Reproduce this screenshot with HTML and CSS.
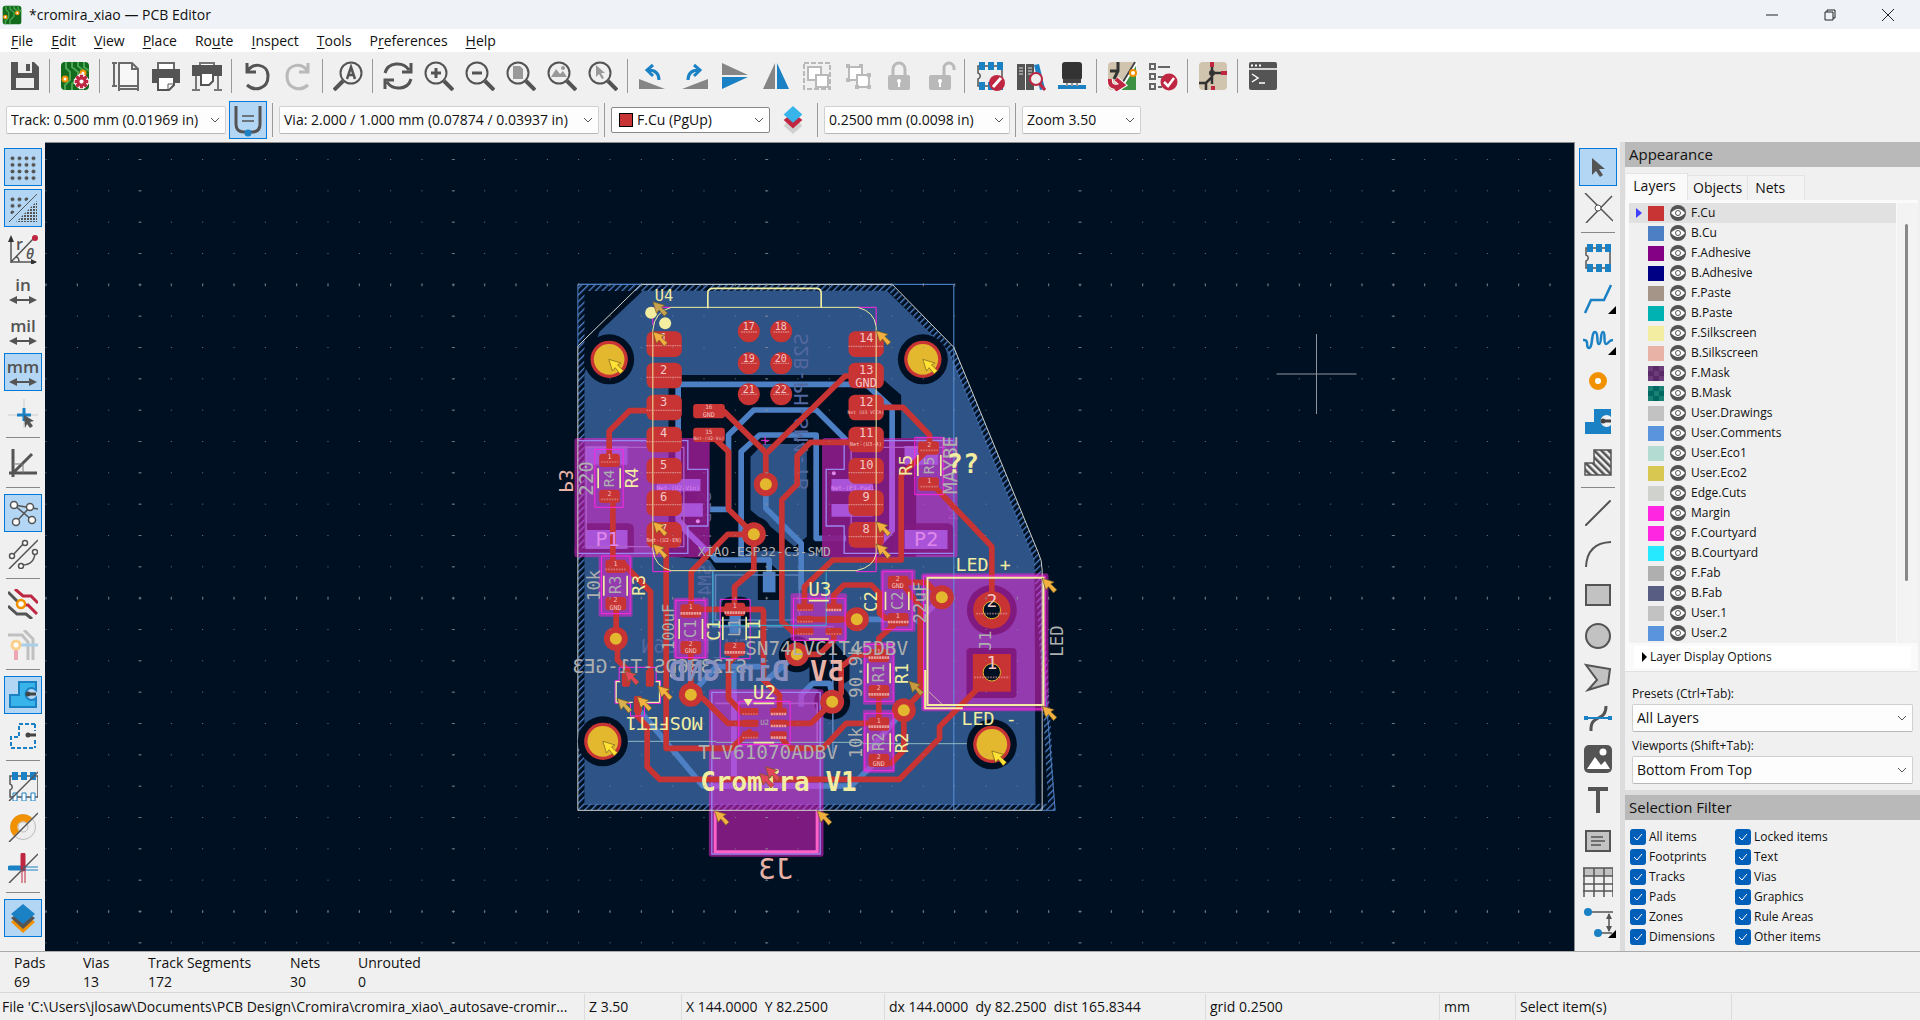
FILE: index.html
```html
<!DOCTYPE html>
<html lang="en">
<head>
<meta charset="utf-8">
<title>*cromira_xiao — PCB Editor</title>
<link rel="stylesheet" href="styles.css">
</head>
<body>
<svg class="defs" aria-hidden="true">
<defs>
<symbol id="board" viewBox="0 0 30 30"><rect x="1" y="1" width="28" height="28" rx="4" fill="#126b1c"/><path d="M6 1v6l4 4v8l-5 5v5M12 1v5l6 5v6l-6 6v6M18 1v4l6 5M24 1v5l5 4" fill="none" stroke="#4aa653" stroke-width="2"/><circle cx="5" cy="18" r="2.500" fill="#fff" stroke="#f29100" stroke-width="2"/><circle cx="23" cy="12" r="2.500" fill="#fff" stroke="#f29100" stroke-width="2"/></symbol>
<symbol id="gear" viewBox="0 0 20 20"><path d="M10 1v18M1 10h18M4 4l12 12M16 4L4 16" stroke="#fff" stroke-width="6"/><path d="M10 2v16M2 10h16M4 4l12 12M16 4L4 16" stroke="#bf2641" stroke-width="4"/><circle cx="10" cy="10" r="4" fill="#fff" stroke="#bf2641" stroke-width="3"/></symbol>
<symbol id="save" viewBox="0 0 30 30"><path d="M1 1h23l5 5v23H1z" fill="#545454"/><path d="M8 1h14v11H8z" fill="#eee"/><path d="M16 3h4v7h-4z" fill="#545454"/><path d="M6 17h18v10H6z" fill="#eee"/></symbol>
<symbol id="page" viewBox="0 0 30 30"><path d="M9 2h13l6 6v17H9z" fill="#f7f7f7" stroke="#6a6a6a" stroke-width="2"/><path d="M22 2v6h6M2 2h5M2 25h5M4 2v23M9 28h19M9 26v4M28 26v4" fill="none" stroke="#6a6a6a" stroke-width="2"/></symbol>
<symbol id="print" viewBox="0 0 30 30"><path d="M7 9V2h16v7" fill="#fff" stroke="#6a6a6a" stroke-width="2"/><path d="M1 8h28v14H1z" fill="#545454"/><path d="M7 16h16v8l-5 5H7z" fill="#fff" stroke="#545454" stroke-width="2"/><path d="M17 29v-6h6" fill="none" stroke="#545454"/></symbol>
<symbol id="plot" viewBox="0 0 30 30"><path d="M8 5V2h14v3" fill="#fff" stroke="#777" stroke-width="2"/><path d="M0 4h30v11H0z" fill="#545454"/><path d="M4 15v14M26 15v14M0 29h8M22 29h8" stroke="#777" stroke-width="2"/><path d="M9 12h12v8l-4 4H9z" fill="#fff" stroke="#545454" stroke-width="2"/></symbol>
<symbol id="undo" viewBox="0 0 30 30"><path d="M5 2v9h9M5 11C9 1 26 2 26 15s-13 16-21 9" fill="none" stroke="#545454" stroke-width="3"/></symbol>
<symbol id="find" viewBox="0 0 30 30"><circle cx="18" cy="12" r="10.500" fill="none" stroke="#545454" stroke-width="2"/><path d="M10 20l-9 9" stroke="#545454" stroke-width="4"/><path d="M14 18l4-12 4 12M15 14h6" fill="none" stroke="#545454" stroke-width="2.500"/></symbol>
<symbol id="refresh" viewBox="0 0 30 30"><path d="M2 12C5 1 20 0 26 9M28 2v9h-9M28 18c-3 11-18 12-24 3M2 28v-9h9" fill="none" stroke="#545454" stroke-width="3"/></symbol>
<symbol id="lens" viewBox="0 0 30 30"><circle cx="12" cy="12" r="10.500" fill="none" stroke="#545454" stroke-width="2"/><path d="M20 20l9 9" stroke="#545454" stroke-width="4"/></symbol>
<symbol id="rot" viewBox="0 0 30 30"><path d="M1 18v10h26z" fill="#858585"/><path d="M10 9c8 0 11 4 11 10M15 4L9 9l6 6" fill="none" stroke="#1a81c4" stroke-width="3"/></symbol>
<symbol id="mirror" viewBox="0 0 30 30"><path d="M14 2v26H2z" fill="#858585"/><path d="M16 2v26h12z" fill="#1a81c4"/></symbol>
<symbol id="group" viewBox="0 0 30 30"><path d="M6 6h13v13H6z" fill="#fff" stroke="#b9b9b9" stroke-width="2"/><path d="M14 14h12v12H14z" fill="#fff" stroke="#b9b9b9" stroke-width="2"/></symbol>
<symbol id="lock" viewBox="0 0 30 30"><rect x="4" y="14" width="22" height="15" rx="2" fill="#b9b9b9"/><circle cx="15" cy="20" r="2" fill="#fff"/><path d="M15 20v6" stroke="#fff" stroke-width="2"/></symbol>
<symbol id="foot" viewBox="0 0 30 30"><path d="M3 5h24v20H3v-7c3-1 3-5 0-6z" fill="#eee" stroke="#545454" stroke-width="1.500"/><path d="M4 1h6v8H4zM13 1h6v8h-6zM22 1h6v8h-6zM4 21h6v8H4zM13 21h6v8h-6zM22 21h6v8h-6z" fill="#1a81c4"/></symbol>
<symbol id="books" viewBox="0 0 30 30"><path d="M1 3h8v26H1zM10 3h8v26h-8z" fill="#545454"/><path d="M3 7h4M3 10h4M3 13h4M12 7h4M12 10h4M12 13h4" stroke="#ddd"/><path d="M18 4l5-1 6 25-5 1z" fill="#1a81c4"/><circle cx="20" cy="18" r="6" fill="#eee" stroke="#bf2641" stroke-width="2"/><path d="M24 23l5 6" stroke="#bf2641" stroke-width="3"/></symbol>
<symbol id="chip3d" viewBox="0 0 30 30"><path d="M1 24h28v4H1z" fill="#1a81c4"/><path d="M10 20v5M15 20v5M20 20v5" stroke="#999" stroke-width="2"/><rect x="5" y="1" width="20" height="18" rx="3" fill="#333"/><path d="M6 18h18v4H6z" fill="#444"/></symbol>
<symbol id="update" viewBox="0 0 30 30"><rect x="1" y="1" width="28" height="28" rx="4" fill="#d1c4ae"/><path d="M29 1v28H12z" fill="#3c9242"/><path d="M11 1v9l-4 8M11 10H3" stroke="#333" stroke-width="3" fill="none"/><path d="M29 1L12 29" stroke="#fff" stroke-width="4"/><path d="M28 1L11 29" stroke="#444" stroke-width="2"/><circle cx="26" cy="12" r="3" fill="#fff" stroke="#f29100" stroke-width="2"/><path d="M3 18c-1 9 7 9 11 6M9 18l7 6-8 5" fill="none" stroke="#fff" stroke-width="6"/><path d="M3 18c-1 9 7 9 11 6M9 18l7 6-8 5" fill="none" stroke="#bf2641" stroke-width="4"/></symbol>
<symbol id="drc" viewBox="0 0 30 30"><path d="M2 3h5v5H2zM2 13h5v5H2zM2 23h5v5H2zM10 6h12M10 16h6M10 26h4" fill="none" stroke="#666" stroke-width="2"/><circle cx="21" cy="21" r="8.500" fill="#bf2641"/><path d="M16 21l4 4 6-8" fill="none" stroke="#fff" stroke-width="2.500"/></symbol>
<symbol id="schem" viewBox="0 0 30 30"><rect x="1" y="1" width="28" height="28" rx="4" fill="#d1c4ae"/><path d="M14 5v18M14 12h10M14 16l-6 6H1M8 22v7" stroke="#333" stroke-width="2.500" fill="none"/><circle cx="14" cy="12" r="3" fill="#333"/><path d="M14 1v5M23 12h6M15 25v4" stroke="#bf2641" stroke-width="4"/></symbol>
<symbol id="console" viewBox="0 0 30 30"><rect x="1" y="1" width="28" height="28" rx="2" fill="#545454"/><path d="M1 8h28M4 13l6 4-6 4M11 22h6" fill="none" stroke="#fff" stroke-width="1.500"/><path d="M3 4.500h10" stroke="#fff" stroke-width="2" stroke-dasharray="2 2"/></symbol>
<symbol id="autotrack" viewBox="0 0 30 34"><path d="M3 3v18q0 8 8 8h8q8 0 8-8V3" fill="none" stroke="#545454" stroke-width="3"/><path d="M9 13h12M9 18h12" stroke="#545454" stroke-width="1.500"/><circle cx="15" cy="30" r="3.500" fill="#1a81c4"/></symbol>
<symbol id="layers3" viewBox="0 0 24 32"><path d="M12 12l10 10-10 9-10-9z" fill="#d0d0d0"/><path d="M12 8l10 8-10 9-10-9z" fill="#bf2641"/><path d="M12 1l10 9-10 9L2 10z" fill="#39b4ea"/></symbol>
<pattern id="dot6" width="7" height="6.600" patternUnits="userSpaceOnUse" x="1" y="3"><circle cx="3.500" cy="3.300" r="2" fill="#545454"/></pattern>
<pattern id="dot3" width="3" height="3" patternUnits="userSpaceOnUse"><rect width="2" height="2" x="1" y="1" fill="#545454"/></pattern>
<symbol id="grid" viewBox="0 0 30 30"><rect x="1" y="2" width="28" height="27" fill="url(#dot6)"/></symbol>
<symbol id="grid2" viewBox="0 0 30 30"><path d="M1 2h24L1 24z" fill="url(#dot6)"/><path d="M29 8v21H8z" fill="url(#dot3)"/><path d="M1 29L29 1" stroke="#545454"/></symbol>
<symbol id="polar" viewBox="0 0 30 30"><path d="M3 29V3M3 28h25M3 28L26 4M11 28q0-4-3-6" fill="none" stroke="#545454" stroke-width="1.500"/><path d="M0 8l3-7 3 7zM23 25l6 3-6 3z" fill="#333"/><circle cx="27" cy="4" r="3" fill="#bf2641"/><text x="8" y="16" class="g16">r</text><text x="18" y="25" class="g14"><tspan font-style="italic">θ</tspan></text></symbol>
<symbol id="arrowlr" viewBox="0 0 30 30"><path d="M5 25h20" stroke="#545454" stroke-width="2"/><path d="M1 25l8-4v8zM29 25l-8-4v8z" fill="#545454"/></symbol>
<symbol id="cursor" viewBox="0 0 30 30"><path d="M0 17h30M16 1v29" stroke="#ccc"/><path d="M9 17h14M16 10v13" stroke="#1a81c4" stroke-width="3"/><path d="M16 17l10 6-4 1 3 4-3 2-3-4-2 4z" fill="#545454"/></symbol>
<symbol id="angle" viewBox="0 0 30 30"><path d="M5 1v28M1 25h28M5 25L24 6" stroke="#545454" stroke-width="3"/><path d="M5 16h10v9" fill="none" stroke="#777"/></symbol>
<symbol id="rats" viewBox="0 0 30 30"><path d="M6 7l24 4M8 24L22 9M6 7l18 15" stroke="#545454" stroke-width="1.500"/><g fill="#fff" stroke="#545454" stroke-width="1.500"><circle cx="6" cy="7" r="3.500"/><circle cx="22" cy="9" r="3.500"/><circle cx="8" cy="24" r="3.500"/><circle cx="24" cy="22" r="3.500"/></g></symbol>
<symbol id="curved" viewBox="0 0 30 30"><path d="M1 30L30 1M5 16L16 4M14 26q12 0 13-12" fill="none" stroke="#545454" stroke-width="1.500"/><g fill="#fff" stroke="#545454" stroke-width="1.500"><circle cx="4" cy="17" r="2.500"/><circle cx="17" cy="4" r="2.500"/><circle cx="13" cy="27" r="2.500"/><circle cx="27" cy="13" r="2.500"/></g></symbol>
<symbol id="nets" viewBox="0 0 30 30"><path d="M0 3l12 12M0 17l9 8h9l6 5" fill="none" stroke="#545454" stroke-width="3"/><path d="M7 0l8 7h8l7 7M15 16h5l9 9" fill="none" stroke="#bf2641" stroke-width="3"/><circle cx="13" cy="15" r="4" fill="#fff" stroke="#f29100" stroke-width="2.500"/></symbol>
<symbol id="netsoff" viewBox="0 0 30 30"><path d="M0 5h14l6 7v18M16 0l9 9v21" fill="none" stroke="#c0c0c0" stroke-width="3"/><path d="M12 15h18" stroke="#a8cfe8" stroke-width="3"/><path d="M8 18v12" stroke="#eba8b4" stroke-width="4"/><circle cx="8" cy="15" r="4" fill="#fff" stroke="#fbd08c" stroke-width="3"/></symbol>
<symbol id="zone" viewBox="0 0 30 30"><path d="M11 2h17v8a6 6 0 1 0 0 8v9H2V15h9z" fill="#1a81c4"/><path d="M19 14h9" stroke="#444" stroke-width="3"/><circle cx="20" cy="14" r="2.500" fill="#444"/></symbol>
<symbol id="zonefill" viewBox="0 0 30 30"><path d="M11 2h17v8a6 6 0 1 0 0 8v9H2V15h9z" fill="#39b4ea" stroke="#1a81c4" stroke-width="2"/><path d="M19 14h9" stroke="#444" stroke-width="3"/><circle cx="20" cy="14" r="2.500" fill="#444"/></symbol>
<symbol id="zoneline" viewBox="0 0 30 30"><path d="M27 3H11v13H3v11h24M27 3v7M27 19v8" fill="none" stroke="#1a81c4" stroke-width="2" stroke-dasharray="4 2"/><path d="M19 14h9" stroke="#444" stroke-width="3"/><circle cx="20" cy="14" r="2.500" fill="#444"/></symbol>
<symbol id="slash" viewBox="0 0 30 30"><path d="M1 30L30 1" stroke="#545454" stroke-width="1.500"/></symbol>
<symbol id="footline" viewBox="0 0 30 30"><path d="M2 5h28v21H2v-7c3-1 3-5 0-6z" fill="none" stroke="#545454" stroke-width="1.500"/><path d="M4 1h6v8H4zM13 1h6v8h-6zM22 1h6v8h-6z" fill="#1a81c4"/><path d="M5 22h4v8H5zM14 22h4v8h-4zM23 22h4v8h-4z" fill="#fff" stroke="#1a81c4"/></symbol>
<symbol id="vialine" viewBox="0 0 30 30"><circle cx="15" cy="15" r="12.500" fill="#eee" stroke="#bbb"/><circle cx="15" cy="15" r="5" fill="#eee" stroke="#bbb"/><path d="M6 24A12.500 12.500 0 0 1 24 6l-5 5a5 5 0 0 0-8 8z" fill="#f29100"/></symbol>
<symbol id="trackline" viewBox="0 0 30 30"><path d="M2 15h13" stroke="#1a81c4" stroke-width="5" stroke-linecap="round"/><path d="M15 2v14" stroke="#bf2641" stroke-width="5" stroke-linecap="round"/><path d="M15 14h15M15 17h15" stroke="#1a81c4"/><path d="M14 16v14M17 16v14" stroke="#bf2641"/></symbol>
<symbol id="layers4" viewBox="0 0 30 30"><path d="M15 9l12 10-12 11L3 19z" fill="#f29100"/><path d="M15 7l12 8-12 11L3 15z" fill="#545454"/><path d="M15 1l12 10-12 10L3 11z" fill="#1a81c4"/></symbol>
<symbol id="pointer" viewBox="0 0 30 30"><path d="M9 6l13 11h-6l4 6-3 2-4-6-4 4z" fill="#545454"/></symbol>
<symbol id="cross" viewBox="0 0 30 30"><path d="M2 0l28 28M29 3L3 30" stroke="#545454" stroke-width="1.500"/><circle cx="15" cy="15" r="3" fill="#fff" stroke="#545454"/></symbol>
<symbol id="route" viewBox="0 0 30 30"><path d="M2 29L8 16h13l7-15" fill="none" stroke="#1a81c4" stroke-width="2.500"/></symbol>
<symbol id="tune" viewBox="0 0 30 30"><path d="M0 15c7-1 2 8 6 8s2-16 6-16 1 12 4 12 1-12 4-12 0 12 3 12 2-4 7-4" fill="none" stroke="#1a81c4" stroke-width="2.500"/></symbol>
<symbol id="via" viewBox="0 0 30 30"><circle cx="15" cy="15" r="6" fill="#fff" stroke="#f29100" stroke-width="6"/></symbol>
<pattern id="rule" width="5" height="5" patternUnits="userSpaceOnUse" patternTransform="rotate(-45)"><rect width="2.500" height="5" fill="#545454"/></pattern>
<symbol id="rulearea" viewBox="0 0 30 30"><path d="M11 2h17v25H2V15h9z" fill="url(#rule)" stroke="#545454" stroke-width="1.500"/></symbol>
<symbol id="line" viewBox="0 0 30 30"><path d="M3 27L27 3" stroke="#545454" stroke-width="2" stroke-linecap="round"/></symbol>
<symbol id="arc" viewBox="0 0 30 30"><path d="M3 28Q4 4 28 3" fill="none" stroke="#545454" stroke-width="2"/></symbol>
<symbol id="rect" viewBox="0 0 30 30"><path d="M3 5h24v20H3z" fill="#c2c2c2" stroke="#545454" stroke-width="2"/></symbol>
<symbol id="circ" viewBox="0 0 30 30"><circle cx="15" cy="15" r="12" fill="#c2c2c2" stroke="#545454" stroke-width="2"/></symbol>
<symbol id="poly" viewBox="0 0 30 30"><path d="M3 3l24 4-2 15-20 6 9-10z" fill="#c2c2c2" stroke="#545454" stroke-width="2"/></symbol>
<symbol id="bezier" viewBox="0 0 30 30"><path d="M8 28C7 10 23 20 23 3" fill="none" stroke="#545454" stroke-width="3"/><path d="M2 15h26" stroke="#1a81c4" stroke-width="2"/><path d="M1 13h4v4H1zM25 13h4v4h-4z" fill="#1a81c4"/></symbol>
<symbol id="image" viewBox="0 0 30 30"><rect x="1" y="1" width="28" height="28" rx="5" fill="#545454"/><path d="M4 25l8-12 6 8 4-4 5 8z" fill="#fff"/><circle cx="20" cy="8" r="3.500" fill="#fff"/></symbol>
<symbol id="tee" viewBox="0 0 30 30"><path d="M5 4h20M15 4v24" stroke="#545454" stroke-width="4"/></symbol>
<symbol id="tbox" viewBox="0 0 30 30"><path d="M3 5h24v20H3z" fill="#c2c2c2" stroke="#545454" stroke-width="2"/><path d="M8 11h12M8 15h14M8 19h10" stroke="#545454" stroke-width="1.500"/></symbol>
<symbol id="table" viewBox="0 0 30 30"><path d="M0 1h30v8H0z" fill="#c2c2c2"/><path d="M0 1h30M0 9h30M0 17h30M0 24h30M1 1v29M11 1v29M21 1v29M30 1v29" stroke="#545454" stroke-width="1.500"/></symbol>
<symbol id="dim" viewBox="0 0 30 30"><path d="M4 4h26M15 25h14M26 6v17" stroke="#545454" stroke-width="1.500"/><path d="M23 11l3-6 3 6zM23 18l3 6 3-6z" fill="#545454"/><circle cx="5" cy="4" r="4" fill="#1a81c4"/><circle cx="15" cy="25" r="4" fill="#1a81c4"/></symbol>
<symbol id="eye" viewBox="0 0 16 16"><circle cx="8" cy="8" r="8" fill="#545454"/><path d="M1 8q7-8 14 0-7 8-14 0z" fill="#fff"/><circle cx="8" cy="8" r="2.500" fill="#fff" stroke="#545454"/></symbol>
</defs>
</svg>

<header class="titlebar">
  <svg class="logo"><use href="#board"/></svg>
  <h1 class="title">*cromira_xiao — PCB Editor</h1>
  <button class="win" aria-label="Minimize"><svg viewBox="0 0 12 12"><path d="M0 6h12"/></svg></button>
  <button class="win" aria-label="Restore"><svg viewBox="0 0 12 12"><path d="M1 3h8v8H1zM3 3V1h8v8H9"/></svg></button>
  <button class="win" aria-label="Close"><svg viewBox="0 0 12 12"><path d="M0 0l12 12M12 0L0 12"/></svg></button>
</header>
<nav class="menu">
  <button><u>F</u>ile</button><button><u>E</u>dit</button><button><u>V</u>iew</button><button><u>P</u>lace</button><button>Ro<u>u</u>te</button><button><u>I</u>nspect</button><button><u>T</u>ools</button><button>P<u>r</u>eferences</button><button><u>H</u>elp</button>
</nav>

<div class="bar">
  <button class="tool" aria-label="Save"><svg><use href="#save"/></svg></button>
  <i class="sep"></i>
  <button class="tool" aria-label="Board setup"><svg viewBox="0 0 30 30"><use href="#board"/><use href="#gear" x="13" y="12" width="17" height="17"/></svg></button>
  <i class="sep"></i>
  <button class="tool" aria-label="Page settings"><svg><use href="#page"/></svg></button>
  <button class="tool" aria-label="Print"><svg><use href="#print"/></svg></button>
  <button class="tool" aria-label="Plot"><svg><use href="#plot"/></svg></button>
  <i class="sep"></i>
  <button class="tool" aria-label="Undo"><svg><use href="#undo"/></svg></button>
  <button class="tool faded flip" aria-label="Redo"><svg><use href="#undo"/></svg></button>
  <i class="sep"></i>
  <button class="tool" aria-label="Find"><svg><use href="#find"/></svg></button>
  <i class="sep"></i>
  <button class="tool" aria-label="Refresh"><svg><use href="#refresh"/></svg></button>
  <button class="tool" aria-label="Zoom in"><svg viewBox="0 0 30 30"><use href="#lens"/><path d="M7 12h10M12 7v10" stroke="#545454" stroke-width="3"/></svg></button>
  <button class="tool" aria-label="Zoom out"><svg viewBox="0 0 30 30"><use href="#lens"/><path d="M7 12h10" stroke="#545454" stroke-width="3"/></svg></button>
  <button class="tool" aria-label="Zoom to page"><svg viewBox="0 0 30 30"><use href="#lens"/><path d="M7 5h7l3 3v10H7z" fill="#999"/></svg></button>
  <button class="tool" aria-label="Zoom to objects"><svg viewBox="0 0 30 30"><use href="#lens"/><path d="M4 16l5-8 4 5 3-3 4 6z" fill="#999"/><circle cx="16" cy="7" r="2" fill="#999"/></svg></button>
  <button class="tool" aria-label="Zoom to selection"><svg viewBox="0 0 30 30"><use href="#lens"/><path d="M8 4l9 8h-4l3 5-2 1-3-5-3 3z" fill="#999"/></svg></button>
  <i class="sep"></i>
  <button class="tool" aria-label="Rotate left"><svg><use href="#rot"/></svg></button>
  <button class="tool flip" aria-label="Rotate right"><svg><use href="#rot"/></svg></button>
  <button class="tool turn" aria-label="Mirror vertically"><svg><use href="#mirror"/></svg></button>
  <button class="tool" aria-label="Mirror horizontally"><svg><use href="#mirror"/></svg></button>
  <button class="tool" aria-label="Group"><svg viewBox="0 0 30 30"><path d="M2 2h26v26H2z" fill="none" stroke="#b9b9b9" stroke-width="2" stroke-dasharray="5 2"/><use href="#group"/></svg></button>
  <button class="tool" aria-label="Ungroup"><svg viewBox="0 0 30 30"><use href="#group"/><path d="M3 3h4v4H3zM16 3h4v4h-4zM3 17h4v4H3zM24 24h4v4h-4zM24 12h4v4h-4zM12 24h4v4h-4z" fill="#b9b9b9"/></svg></button>
  <button class="tool" aria-label="Lock"><svg viewBox="0 0 30 30"><use href="#lock"/><path d="M9 15V8a6 6 0 0 1 12 0v7" fill="none" stroke="#b9b9b9" stroke-width="3"/></svg></button>
  <button class="tool" aria-label="Unlock"><svg viewBox="0 0 30 30"><use href="#lock"/><path d="M19 15V7a5 5 0 0 1 10 0v2" fill="none" stroke="#b9b9b9" stroke-width="3"/></svg></button>
  <i class="sep"></i>
  <button class="tool" aria-label="Footprint editor"><svg viewBox="0 0 30 30"><use href="#foot"/><circle cx="22" cy="22" r="8" fill="#bf2641"/><path d="M18 26l8-9" stroke="#fff" stroke-width="3"/></svg></button>
  <button class="tool" aria-label="Footprint browser"><svg><use href="#books"/></svg></button>
  <button class="tool" aria-label="3D viewer"><svg><use href="#chip3d"/></svg></button>
  <i class="sep"></i>
  <button class="tool" aria-label="Update from schematic"><svg><use href="#update"/></svg></button>
  <button class="tool" aria-label="Design rules checker"><svg><use href="#drc"/></svg></button>
  <i class="sep"></i>
  <button class="tool" aria-label="Schematic editor"><svg><use href="#schem"/></svg></button>
  <i class="sep"></i>
  <button class="tool" aria-label="Scripting console"><svg><use href="#console"/></svg></button>
</div>

<div class="bar second">
  <select class="combo track" aria-label="Track width"><option>Track: 0.500 mm (0.01969 in)</option></select>
  <button class="tool on auto" aria-label="Auto track width"><svg><use href="#autotrack"/></svg></button>
  <i class="sep"></i>
  <select class="combo viasize" aria-label="Via size"><option>Via: 2.000 / 1.000 mm (0.07874 / 0.03937 in)</option></select>
  <i class="sep"></i>
  <label class="layerbox"><span class="chip"></span><select class="combo bare" aria-label="Active layer"><option>F.Cu (PgUp)</option></select></label>
  <button class="tool pair" aria-label="Layer pair"><svg><use href="#layers3"/></svg></button>
  <i class="sep"></i>
  <select class="combo gridsize" aria-label="Grid"><option>0.2500 mm (0.0098 in)</option></select>
  <i class="sep"></i>
  <select class="combo zoom" aria-label="Zoom"><option>Zoom 3.50</option></select>
</div>

<main class="work">
  <div class="side">
    <button class="tool on" aria-label="Grid"><svg><use href="#grid"/></svg></button>
    <button class="tool on" aria-label="Grid overrides"><svg><use href="#grid2"/></svg></button>
    <button class="tool" aria-label="Polar"><svg><use href="#polar"/></svg></button>
    <button class="tool" aria-label="Inches"><svg viewBox="0 0 30 30"><text x="15" y="16" class="unit">in</text><use href="#arrowlr"/></svg></button>
    <button class="tool" aria-label="Mils"><svg viewBox="0 0 30 30"><text x="15" y="16" class="unit">mil</text><use href="#arrowlr"/></svg></button>
    <button class="tool on" aria-label="Millimeters"><svg viewBox="0 0 30 30"><text x="15" y="16" class="unit">mm</text><use href="#arrowlr"/></svg></button>
    <button class="tool" aria-label="Full cursor"><svg><use href="#cursor"/></svg></button>
    <i class="sep"></i>
    <button class="tool" aria-label="Limit angles"><svg><use href="#angle"/></svg></button>
    <i class="sep"></i>
    <button class="tool on" aria-label="Ratsnest"><svg><use href="#rats"/></svg></button>
    <button class="tool" aria-label="Curved ratsnest"><svg><use href="#curved"/></svg></button>
    <i class="sep"></i>
    <button class="tool" aria-label="Inactive layers"><svg><use href="#nets"/></svg></button>
    <button class="tool" aria-label="Net colors"><svg><use href="#netsoff"/></svg></button>
    <i class="sep"></i>
    <button class="tool on" aria-label="Filled zones"><svg><use href="#zonefill"/></svg></button>
    <button class="tool" aria-label="Zone outlines"><svg><use href="#zoneline"/></svg></button>
    <i class="sep"></i>
    <button class="tool" aria-label="Sketch footprints"><svg viewBox="0 0 30 30"><use href="#footline"/><use href="#slash"/></svg></button>
    <button class="tool" aria-label="Sketch vias"><svg viewBox="0 0 30 30"><use href="#vialine"/><use href="#slash"/></svg></button>
    <button class="tool" aria-label="Sketch tracks"><svg viewBox="0 0 30 30"><use href="#trackline"/><use href="#slash"/></svg></button>
    <i class="sep"></i>
    <button class="tool on" aria-label="Appearance panel"><svg><use href="#layers4"/></svg></button>
  </div>

  <div class="canvas">
  <svg class="pcb" viewBox="-1515 -381 4590 2424" preserveAspectRatio="xMidYMid slice" role="img" aria-label="Board layout">
    <defs>
      <pattern id="g1" width="94" height="94" x="650" y="43" patternUnits="userSpaceOnUse"><rect width="3" height="3" fill="#8a9199"/></pattern>
      <pattern id="g2" width="94" height="940" x="650" y="40" patternUnits="userSpaceOnUse"><rect width="3" height="9" fill="#8a9199"/></pattern>
      <pattern id="g3" width="940" height="94" x="647" y="43" patternUnits="userSpaceOnUse"><rect width="9" height="3" fill="#8a9199"/></pattern>
      <pattern id="hatch" width="14" height="14" patternUnits="userSpaceOnUse" patternTransform="rotate(45)"><rect width="4" height="14" fill="#4d7fc4"/></pattern>
      <path id="arr" d="M0 0L36 11L26 17L44 34L34 44L19 25L11 35Z" stroke="#6b5a20" stroke-width="2"/>
      <g id="mount"><circle r="75" fill="#001023"/><circle r="56" fill="#c83434"/><circle r="46" fill="#e3b72e"/></g>
      <g id="hole"><circle r="36" fill="#c83434"/><circle r="18" fill="#e3b72e"/></g>
      <rect id="pad" width="106" height="77" rx="20" fill="#c83434"/>
      <rect id="sp" width="62" height="40" rx="9" fill="#c83434"/>
      <rect id="tp" width="50" height="22" rx="6" fill="#c83434"/>
    </defs>
    <rect x="-1515" y="-381" width="4590" height="2424" fill="#001023"/>
    <path fill="#2e5386" d="M280 62H1012L1200 245L1455 870L1458 1605H105V310L150 185Z"/>
    <path class="void" d="M357 315H985L1055 375V505H1100V860H357ZM372 860H640L690 905V990H625V900H500L480 870ZM515 1010q0-30 30-30h30q28 0 28 30v60h-88ZM780 1110h70l50 60v60l-60 40-60-20Z"/>
    <path fill="#2e5386" d="M603 560L640 522H772V800L735 830L603 720ZM610 840L560 870H810V850Z"/>
    <circle class="void" cx="613" cy="793" r="54"/><circle class="void" cx="742" cy="1153" r="54"/><circle class="void" cx="848" cy="1295" r="54"/>
    <path d="M95 53H1020L1205 240L1462 868L1485 1200L1506 1611H95Z" fill="none" stroke="url(#hatch)" stroke-width="20"/>
    <g class="bt">
      <path d="M386 343H950L1028 415V780L985 825M386 343V750L480 850M480 718H537M537 718V495L613 420H800L890 510M575 860V545L630 495H800V805H890M649 640V715L755 820V960M480 845L500 870H659V950M265 1315L460 1548H905L975 1480M424 1274L500 1190H640M553 1540V1200M755 1310V1275L790 1240H840L850 1280M640 1240L742 1153M920 1048H1040M1177 982L1100 1060M1063 1320L960 1440"/>
    </g>
    <rect x="640" y="905" width="38" height="62" fill="#4d7fc4"/><rect x="540" y="1020" width="34" height="70" fill="#4d7fc4"/>

    <g class="bfab">
      <path d="M490 900V1070H850V1450M498 915H750V1050H498Z" fill="none" stroke="#5b7fb8" stroke-width="5"/>
      <text transform="translate(775 190) rotate(90) scale(1 -1)" class="t60">S2B-PH-SM4-TB</text>
      <text transform="translate(485 665) rotate(90) scale(1 -1)" class="t52">S2B-PH-SM4</text>
      <text transform="translate(1225 700) rotate(90) scale(1 -1)" class="t44">P4</text>
      <text transform="translate(600 1150) scale(-1 1)" class="t60">SW_TON06N</text>
    </g>

    <g class="pz">
      <rect x="75" y="504" width="405" height="358" rx="8"/><rect x="818" y="504" width="406" height="358" rx="8"/>
      <rect x="478" y="1258" width="344" height="502" rx="8"/><rect x="1115" y="910" width="382" height="414" rx="8"/>
      <rect x="147" y="852" width="102" height="188" rx="6"/><rect x="372" y="983" width="105" height="184" rx="6"/>
      <rect x="723" y="970" width="170" height="142" rx="6"/><rect x="993" y="898" width="105" height="187" rx="6"/>
      <rect x="940" y="1117" width="97" height="187" rx="6"/><rect x="940" y="1319" width="97" height="189" rx="6"/>
    </g>
    <path d="M108 760H235q18 0 18 18V850H75V835H108ZM1063 760H1193q18 0 18 18V855H1030V790ZM415 512H480V862H415ZM818 512H884V600H830V765H884V862H818Z" fill="#801a80" opacity=".85"/>
    <g fill="#a954d8"><path d="M108 528H234V584H108ZM108 780H234V837H108ZM1065 780H1194V837H1065ZM1065 528H1165V584H1065ZM322 627H453V664H322ZM380 700H460V740H380ZM846 627H970V664H846ZM846 702H970V740H846Z"/><path d="M386 760L480 850M1028 512V780L985 825M553 1260V1540M490 1548H815" stroke="#a954d8" stroke-width="17" fill="none"/></g>
    <path d="M85 512H415V598H475V768H415V850H85M1213 512H884V598H830V768H884V850H1213M487 1267H812V1752H487Z" fill="none" stroke="#9a86f0" stroke-width="4"/>
    <path d="M110 532H403V830H110ZM1187 532H905V830" fill="none" stroke="#b060c8" stroke-width="4"/>
    <path d="M497 1622V1745H803V1622" fill="none" stroke="#ff62c8" stroke-width="9"/>
    <path d="M497 1300H803V1420" fill="none" stroke="#b058cc" stroke-width="5"/>

    <path d="M1213 43V1621M85 43H1213" fill="none" stroke="#5a94dc" stroke-width="3"/>
    <path d="M275 43H1028L1213 232L1465 845Q1478 870 1478 900V1621H85V228Z" fill="none" stroke="#d0d2cd" stroke-width="3"/>
    <path d="M85 228V43H275M1478 1140L1517 1621H1478" fill="none" stroke="#4d7fc4" stroke-width="3"/>
    <path d="M216 1414H500M500 1417H940M940 1421H1275" fill="none" stroke="#8fb8bd" stroke-width="3"/>

    <use href="#mount" x="179" y="268"/><use href="#mount" x="1120" y="268"/><use href="#mount" x="160" y="1414"/><use href="#mount" x="1327" y="1423"/>
    <circle cx="1327" cy="1020" r="75" fill="#801a80"/><rect x="1251" y="1134" width="150" height="150" rx="12" fill="#801a80"/>

    <g class="ft">
      <path d="M345 422H240L179 484V570M190 690V880M225 885L303 965V1225M200 1000V1106M204 1106V1170L235 1200V1235M350 780V1435H545L600 1385M613 793H535L425 905V1020M613 793V900L555 950V1020M425 1018H635Q642 1018 642 1030V1230L690 1275V1325M500 510L537 545V718L613 793M525 425L649 548V643M649 552L887 318H950M950 517H783L743 558V643L697 690V1055L730 1085H765M1000 412H1060L1140 495V530M1140 535L1055 615V870H850L765 950V1010M1160 655L1327 830V1020M853 1010V975L883 945H965L990 970V1030L1010 1045H1045M765 1048H922M853 1085V1110L810 1153H742M1060 937H1130L1177 982M1065 950L1112 1010V1270L1063 1321V1440L1025 1480H990M1045 1055L988 1105V1150M988 1155H920L875 1190V1270L785 1360H690M988 1260V1360M988 1360H890L820 1435H720L690 1395M424 1274L460 1285L535 1360H600M424 1150V1274M570 1145L537 1180V1285L575 1325H600M265 1290V1340L293 1370V1490L330 1528H1050L1170 1405V1370L1290 1250"/>
    </g>
    <g>
      <use href="#pad" x="291" y="184"/><use href="#pad" x="291" y="278"/><use href="#pad" x="291" y="374"/><use href="#pad" x="291" y="470"/><use href="#pad" x="291" y="564"/><use href="#pad" x="291" y="661"/><use href="#pad" x="291" y="756"/>
      <use href="#pad" x="897" y="184"/><use href="#pad" x="897" y="278"/><use href="#pad" x="897" y="374"/><use href="#pad" x="897" y="470"/><use href="#pad" x="897" y="564"/><use href="#pad" x="897" y="661"/><use href="#pad" x="897" y="756"/>
      <g fill="#c83434"><circle cx="598" cy="184" r="33"/><circle cx="695" cy="184" r="33"/><circle cx="598" cy="280" r="33"/><circle cx="695" cy="280" r="33"/><circle cx="598" cy="373" r="33"/><circle cx="695" cy="373" r="33"/><rect x="431" y="402" width="95" height="43" rx="9"/><rect x="431" y="473" width="95" height="43" rx="9"/></g>
      <use href="#sp" x="149" y="551"/><use href="#sp" x="149" y="659"/><use href="#sp" x="1106" y="514"/><use href="#sp" x="1106" y="622"/>
      <use href="#sp" x="168" y="869"/><use href="#sp" x="168" y="981"/><use href="#sp" x="393" y="1003"/><use href="#sp" x="393" y="1113"/><use href="#sp" x="525" y="998"/><use href="#sp" x="525" y="1117"/>
      <use href="#sp" x="1015" y="917"/><use href="#sp" x="1015" y="1029"/><use href="#sp" x="957" y="1137"/><use href="#sp" x="957" y="1245"/><use href="#sp" x="957" y="1342"/><use href="#sp" x="957" y="1451"/>
      <use href="#tp" x="742" y="1001"/><use href="#tp" x="742" y="1037"/><use href="#tp" x="742" y="1073"/><use href="#tp" x="828" y="1001"/><use href="#tp" x="828" y="1037"/><use href="#tp" x="828" y="1073"/>
      <use href="#tp" x="577" y="1314"/><use href="#tp" x="577" y="1349"/><use href="#tp" x="577" y="1384"/><use href="#tp" x="662" y="1314"/><use href="#tp" x="662" y="1349"/><use href="#tp" x="662" y="1384"/>
      <rect x="217" y="1200" width="24" height="50" rx="5" fill="#c83434"/><rect x="289" y="1200" width="24" height="50" rx="5" fill="#c83434"/><rect x="253" y="1278" width="24" height="50" rx="5" fill="#c83434"/>
      <use href="#hole" x="649" y="643"/><use href="#hole" x="613" y="793"/><use href="#hole" x="199" y="1106"/><use href="#hole" x="424" y="1274"/><use href="#hole" x="742" y="1153"/><use href="#hole" x="848" y="1295"/><use href="#hole" x="1063" y="1321"/><use href="#hole" x="1177" y="982"/><use href="#hole" x="922" y="1048"/>
      <circle cx="1327" cy="1020" r="56" fill="#c83434"/><rect x="1270" y="1152" width="114" height="113" fill="#c83434"/>
      <g fill="#001023" stroke="#e3b72e" stroke-width="3"><circle cx="1327" cy="1020" r="26"/><circle cx="1327" cy="1207" r="26"/></g>
    </g>

    <g class="cy">
      <path d="M365 112H310V165M925 112H980V165M310 850V905H365M920 905H980V850M136 538H221V712H136ZM1096 502H1181V674H1096ZM156 858H242V1031H156ZM379 991H467V1163H379ZM512 988H602V1166H512ZM732 985H887V1111H732ZM1000 905H1088V1078H1000ZM946 1123H1031V1294H946ZM946 1330H1031V1502H946ZM568 1294H722V1424H568ZM1122 918H1487V1317H1122ZM635 511H660M647 500V524M197 1300V1232H209V1192H320V1232H333V1300H285V1338H243V1300Z"/>
    </g>
    <path d="M490 907V1066M490 1066H830M830 907V1066" fill="none" stroke="#35b0d0" stroke-width="3"/>

    <g class="silk">
      <path d="M475 115V70Q475 55 492 55H800Q815 55 815 70V112" stroke-width="5"/>
      <path d="M365 112H925Q975 125 980 170V850Q975 890 920 902H365Q315 890 310 840V180Q315 125 365 112" stroke-width="3"/>
      <path d="M146 595V655M212 595V655M1105 555V618M1174 555V618M163 917V977M233 917V977M389 1047V1107M459 1047V1107M520 1040V1110M590 1040V1110M1008 965V1020M1078 965V1020M955 1180V1240M1022 1180V1240M955 1390V1445M1022 1390V1445M778 992H838M778 1107H838M612 1300H674M612 1418H674" stroke-width="5"/>
      <path d="M200 1297V1235H212M330 1297V1235H318M200 1297H250M282 1297H330" stroke-width="4"/>
      <path d="M1134 923H1482V1305H1134ZM1127 1200V1315H1240" stroke-width="6"/>
      <path d="M1138 1265L1178 1303" stroke-width="2"/>
      <circle cx="370" cy="1216" r="6" stroke-width="4"/>
    </g>
    <g fill="#f2eda1"><circle cx="305" cy="128" r="18"/><circle cx="347" cy="160" r="18"/><circle cx="680" cy="1504" r="8"/><path d="M582 1287H610L596 1308Z"/></g>

    <g class="net">
      <path d="M291 227H395M291 322H395M291 421H395M291 515H395M291 608H395M291 704H395M897 229H1000M897 608H1000M897 704H1000M897 800H1000M575 186H622M672 186H719M575 280H622M672 280H719M575 373H622M672 373H719" stroke-width="4" stroke-dasharray="5 2" opacity=".7"/>
      <text x="478" y="418" class="t18">16</text><text x="478" y="440" class="t20">GND</text><text x="478" y="491" class="t18">15</text><text x="478" y="511" class="t14">Net-(U2-Vo)</text>
      <text x="344" y="816" class="t16">Net-(U2-EN)</text><text x="949" y="431" class="t14">Net (U3 VCCA)</text><text x="949" y="529" class="t16">Net-(U3-A)</text>
      <text x="180" y="566" class="t20">1</text><text x="180" y="677" class="t20">2</text><text x="1139" y="530" class="t20">2</text><text x="1139" y="639" class="t20">1</text>
      <text x="198" y="887" class="t20">1</text><text x="198" y="996" class="t20">2</text><text x="198" y="1019" class="t20">GND</text><text x="424" y="1018" class="t20">1</text><text x="424" y="1129" class="t20">2</text><text x="424" y="1150" class="t20">GND</text><text x="556" y="1014" class="t20">1</text><text x="556" y="1133" class="t20">2</text>
      <text x="1045" y="932" class="t20">2</text><text x="1045" y="955" class="t20">GND</text><text x="1045" y="1045" class="t20">1</text><text x="988" y="1152" class="t20">1</text><text x="988" y="1260" class="t20">2</text><text x="988" y="1358" class="t20">1</text><text x="988" y="1467" class="t20">2</text><text x="988" y="1489" class="t20">GND</text>
      <path d="M393 1030H456M525 1028H588M525 1147H588M1015 1056H1077M957 1163H1019M957 1273H1019M957 1370H1019M829 1020H877M664 1332H710M664 1368H710M664 1403H710" stroke-width="8" stroke-dasharray="6 2"/>
      <path d="M155 576H206M155 688H206M1113 541H1165M1113 650H1165M168 898H228M744 1020H790M744 1055H790M744 1092H790M829 1092H877M579 1332H625M579 1403H625M1280 1031H1375M1274 1222H1380" stroke-width="5" stroke-dasharray="5 3" opacity=".6"/>
    </g>
    <g class="num">
      <text x="342" y="216">1</text><text x="342" y="312">2</text><text x="342" y="408">3</text><text x="342" y="502">4</text><text x="342" y="598">5</text><text x="342" y="694">6</text><text x="342" y="788">7</text>
      <text x="950" y="216">14</text><text x="950" y="312">13</text><text x="950" y="350">GND</text><text x="950" y="408">12</text><text x="950" y="502">11</text><text x="950" y="598">10</text><text x="950" y="694">9</text><text x="950" y="789">8</text>
    </g>
    <g class="num small"><text x="598" y="179">17</text><text x="694" y="179">18</text><text x="598" y="275">19</text><text x="694" y="275">20</text><text x="598" y="369">21</text><text x="694" y="369">22</text></g>
    <g class="num big"><text x="1327" y="1010">2</text><text x="1327" y="1198">1</text></g>

    <g class="violet"><text x="174" y="828" class="t60">P1</text><text x="1130" y="828" class="t60">P2</text><text x="386" y="660" class="t18">Net-(U2-Vin)</text><text x="915" y="660" class="t18">Net-(P3-Pad1)</text><circle cx="445" cy="754" r="6"/><circle cx="853" cy="610" r="6"/></g>

    <g class="fab">
      <text x="445" y="858" class="t39">XIAO-ESP32-C3-SMD</text>
      <text transform="translate(130 678) rotate(-90)" class="t57">220</text>
      <text transform="translate(152 993) rotate(-90)" class="t52">10k</text>
      <text transform="translate(193 652) rotate(-90)" class="t44">R4</text>
      <text transform="translate(1153 613) rotate(-90)" class="t44">R5</text>
      <text transform="translate(1223 672) rotate(-90)" class="t57">MAYBE</text>
      <text transform="translate(213 972) rotate(-90)" class="t46">R3</text>
      <text transform="translate(440 1104) rotate(-90)" class="t46">C1</text>
      <text transform="translate(570 1100) rotate(-90)" class="t46">L1</text>
      <text transform="translate(1060 1020) rotate(-90)" class="t46">C2</text>
      <text transform="translate(1004 1237) rotate(-90)" class="t46">R1</text>
      <text transform="translate(1004 1443) rotate(-90)" class="t46">R2</text>
      <text transform="translate(372 1140) rotate(-90)" class="t46">100uF</text>
      <text transform="translate(1128 1060) rotate(-90)" class="t52">22uF</text>
      <text transform="translate(938 1283) rotate(-90)" class="t52">90.9k</text>
      <text transform="translate(938 1465) rotate(-90)" class="t52">10k</text>
      <text transform="translate(1325 1142) rotate(-90)" class="t50">J1</text>
      <text transform="translate(1541 1160) rotate(-90)" class="t52">LED</text>
      <text x="587" y="1156" class="t57">SN74LVC1T45DBV</text>
      <text x="446" y="1467" class="t57">TLV61070ADBV</text>
      <text x="632" y="1366" class="t22">U2</text>
      <text transform="translate(592 1210) scale(-1 1)" class="t57">SI2336DS-T1-GE3</text>
    </g>
    <g class="back">
      <text transform="translate(28 668) rotate(-90) scale(1 -1)" class="t57">P3</text>
      <text transform="translate(730 1828) scale(-1 1)" class="t86">J3</text>
      <text transform="translate(885 1233) scale(-1 1)" class="t86 bold">5V</text>
    </g>
    <text transform="translate(720 1233) scale(-1 1)" class="t86 bold bb">Din GND</text>
    <g class="lab">
      <text x="316" y="94" class="t46">U4</text>
      <text transform="translate(266 655) rotate(-90)" class="t52">R4</text>
      <text transform="translate(1088 617) rotate(-90)" class="t52">R5</text>
      <text transform="translate(285 977) rotate(-90)" class="t52">R3</text>
      <text transform="translate(512 1112) rotate(-90)" class="t52">C1</text>
      <text transform="translate(630 1110) rotate(-90)" class="t52">L1</text>
      <text transform="translate(983 1026) rotate(-90)" class="t52">C2</text>
      <text transform="translate(1075 1242) rotate(-90)" class="t52">R1</text>
      <text transform="translate(1075 1450) rotate(-90)" class="t52">R2</text>
      <text x="776" y="977" class="t57">U3</text><text x="610" y="1288" class="t57">U2</text>
      <text x="1192" y="610" class="t80 bold">??</text>
      <text x="1218" y="903" class="t55">LED +</text><text x="1236" y="1365" class="t55">LED -</text>
      <text x="452" y="1562" class="t78 bold">Cromira V1</text>
      <text transform="translate(460 1342) rotate(180)" class="t55">MOSFET1</text>
    </g>
    <g fill="#f2b040">
      <use href="#arr" x="310" y="95" fill="#c7a250"/><use href="#arr" x="310" y="185"/><use href="#arr" x="310" y="755"/><use href="#arr" x="310" y="822"/><use href="#arr" x="980" y="182"/><use href="#arr" x="980" y="755"/><use href="#arr" x="980" y="822"/>
      <use href="#arr" x="495" y="1622"/><use href="#arr" x="803" y="1622"/><use href="#arr" x="1478" y="925"/><use href="#arr" x="1478" y="1308"/><use href="#arr" x="203" y="1285" fill="#d9b050"/><use href="#arr" x="263" y="1280"/><use href="#arr" x="325" y="1247"/><use href="#arr" x="1078" y="1233" fill="#c79a40"/>
    </g>
    <g fill="#ffe234"><use href="#arr" x="178" y="268"/><use href="#arr" x="1120" y="268"/><use href="#arr" x="160" y="1414"/><use href="#arr" x="1327" y="1443"/></g>
    <g fill="#e2455a"><use href="#arr" x="225" y="1202"/><use href="#arr" x="630" y="1510"/><use href="#arr" x="648" y="1490"/></g>
    <g opacity=".8"><rect x="-1515" y="-381" width="4590" height="2424" fill="url(#g1)"/><rect x="-1515" y="-381" width="4590" height="2424" fill="url(#g2)"/><rect x="-1515" y="-381" width="4590" height="2424" fill="url(#g3)"/></g>
    <path d="M2181 312H2421M2301 192V432" stroke="#8f949a" stroke-width="3"/>
  </svg>
  </div>

  <div class="side">
    <button class="tool on" aria-label="Select"><svg><use href="#pointer"/></svg></button>
    <button class="tool" aria-label="Local ratsnest"><svg><use href="#cross"/></svg></button>
    <i class="sep"></i>
    <button class="tool" aria-label="Place footprint"><svg><use href="#foot"/></svg></button>
    <button class="tool more" aria-label="Route track"><svg><use href="#route"/></svg></button>
    <button class="tool more" aria-label="Tune length"><svg><use href="#tune"/></svg></button>
    <button class="tool" aria-label="Via"><svg><use href="#via"/></svg></button>
    <button class="tool" aria-label="Zone"><svg><use href="#zone"/></svg></button>
    <button class="tool" aria-label="Rule area"><svg><use href="#rulearea"/></svg></button>
    <i class="sep"></i>
    <button class="tool" aria-label="Line"><svg><use href="#line"/></svg></button>
    <button class="tool" aria-label="Arc"><svg><use href="#arc"/></svg></button>
    <button class="tool" aria-label="Rectangle"><svg><use href="#rect"/></svg></button>
    <button class="tool" aria-label="Circle"><svg><use href="#circ"/></svg></button>
    <button class="tool" aria-label="Polygon"><svg><use href="#poly"/></svg></button>
    <button class="tool" aria-label="Bezier"><svg><use href="#bezier"/></svg></button>
    <button class="tool" aria-label="Image"><svg><use href="#image"/></svg></button>
    <button class="tool" aria-label="Text"><svg><use href="#tee"/></svg></button>
    <button class="tool" aria-label="Text box"><svg><use href="#tbox"/></svg></button>
    <button class="tool" aria-label="Table"><svg><use href="#table"/></svg></button>
    <button class="tool more" aria-label="Dimension"><svg><use href="#dim"/></svg></button>
  </div>

  <aside class="panel">
    <h2 class="head">Appearance</h2>
    <div class="tabs"><button class="tab active">Layers</button><button class="tab">Objects</button><button class="tab nets">Nets</button></div>
    <div class="book">
      <div class="scroll">
        <ul class="layers">
          <li class="cur"><span class="sw c1"></span><svg><use href="#eye"/></svg>F.Cu</li>
          <li><span class="sw c2"></span><svg><use href="#eye"/></svg>B.Cu</li>
          <li><span class="sw c3"></span><svg><use href="#eye"/></svg>F.Adhesive</li>
          <li><span class="sw c4"></span><svg><use href="#eye"/></svg>B.Adhesive</li>
          <li><span class="sw c5"></span><svg><use href="#eye"/></svg>F.Paste</li>
          <li><span class="sw c6"></span><svg><use href="#eye"/></svg>B.Paste</li>
          <li><span class="sw c7"></span><svg><use href="#eye"/></svg>F.Silkscreen</li>
          <li><span class="sw c8"></span><svg><use href="#eye"/></svg>B.Silkscreen</li>
          <li><span class="sw c9"></span><svg><use href="#eye"/></svg>F.Mask</li>
          <li><span class="sw c10"></span><svg><use href="#eye"/></svg>B.Mask</li>
          <li><span class="sw c11"></span><svg><use href="#eye"/></svg>User.Drawings</li>
          <li><span class="sw c12"></span><svg><use href="#eye"/></svg>User.Comments</li>
          <li><span class="sw c13"></span><svg><use href="#eye"/></svg>User.Eco1</li>
          <li><span class="sw c14"></span><svg><use href="#eye"/></svg>User.Eco2</li>
          <li><span class="sw c15"></span><svg><use href="#eye"/></svg>Edge.Cuts</li>
          <li><span class="sw c16"></span><svg><use href="#eye"/></svg>Margin</li>
          <li><span class="sw c16"></span><svg><use href="#eye"/></svg>F.Courtyard</li>
          <li><span class="sw c17"></span><svg><use href="#eye"/></svg>B.Courtyard</li>
          <li><span class="sw c18"></span><svg><use href="#eye"/></svg>F.Fab</li>
          <li><span class="sw c19"></span><svg><use href="#eye"/></svg>B.Fab</li>
          <li><span class="sw c11"></span><svg><use href="#eye"/></svg>User.1</li>
          <li><span class="sw c12"></span><svg><use href="#eye"/></svg>User.2</li>
        </ul>
        <div class="rail"><div class="thumb"></div></div>
      </div>
      <button class="fold">Layer Display Options</button>
    </div>
    <div class="presets">
      <label for="presets">Presets (Ctrl+Tab):</label>
      <select id="presets" class="combo"><option>All Layers</option></select>
      <label for="views">Viewports (Shift+Tab):</label>
      <select id="views" class="combo"><option>Bottom From Top</option></select>
    </div>
    <h2 class="head">Selection Filter</h2>
    <div class="filter">
      <label><input type="checkbox" checked>All items</label><label><input type="checkbox" checked>Locked items</label>
      <label><input type="checkbox" checked>Footprints</label><label><input type="checkbox" checked>Text</label>
      <label><input type="checkbox" checked>Tracks</label><label><input type="checkbox" checked>Vias</label>
      <label><input type="checkbox" checked>Pads</label><label><input type="checkbox" checked>Graphics</label>
      <label><input type="checkbox" checked>Zones</label><label><input type="checkbox" checked>Rule Areas</label>
      <label><input type="checkbox" checked>Dimensions</label><label><input type="checkbox" checked>Other items</label>
    </div>
  </aside>
</main>

<dl class="info">
  <div><dt>Pads</dt><dd>69</dd></div><div><dt>Vias</dt><dd>13</dd></div><div><dt>Track Segments</dt><dd>172</dd></div><div><dt>Nets</dt><dd>30</dd></div><div><dt>Unrouted</dt><dd>0</dd></div>
</dl>
<footer class="status">
  <span class="s1">File 'C:\Users\jlosaw\Documents\PCB Design\Cromira\cromira_xiao\_autosave-cromir...</span><span class="s2">Z 3.50</span><span class="s3">X 144.0000&nbsp; Y 82.2500</span><span class="s4">dx 144.0000&nbsp; dy 82.2500&nbsp; dist 165.8344</span><span class="s5">grid 0.2500</span><span class="s6">mm</span><span class="s7">Select item(s)</span><span class="s8"></span>
</footer>
</body>
</html>
```
FILE: styles.css
```css
* { box-sizing: border-box; }
html, body { height: 100%; }
body {
  margin: 0;
  display: flex;
  flex-direction: column;
  background: #f0f0f0;
  color: #111;
  font: 14px/20px "Open Sans", "Noto Sans", sans-serif;
  overflow: hidden;
}
button { font: inherit; color: inherit; border: 0; background: none; padding: 0; }
h1, h2, ul, dl, dd { margin: 0; padding: 0; font-weight: 400; }
.defs { position: absolute; width: 0; height: 0; }

.titlebar { flex: none; display: flex; align-items: center; height: 29px; padding-right: 3px; background: #eff3f8; }
.logo { width: 20px; height: 20px; margin: 0 7px 0 2px; }
.title { flex: 1; font-size: 14px; }
.win { width: 58px; height: 29px; display: grid; place-items: center; }
.win svg { width: 12px; height: 12px; fill: none; stroke: #222; overflow: visible; }

.menu { flex: none; display: flex; gap: 18px; height: 23px; padding: 1px 11px 0; background: #fff; }
.menu u { text-underline-offset: 2px; }

.bar { flex: none; display: flex; align-items: center; height: 48px; padding: 0 6px; }
.bar.second { height: 42px; padding-bottom: 2px; }
.tool { position: relative; flex: none; display: grid; place-items: center; width: 38px; height: 38px; border: 1px solid transparent; }
.bar .tool { margin-right: 3px; }
.tool svg { width: 30px; height: 30px; overflow: visible; }
.tool.on { background: #b3d6f4; border-color: #0078d7; }
.faded svg { opacity: .35; }
.flip svg { transform: scaleX(-1); }
.turn svg { transform: rotate(90deg); }
.more::after { content: ""; position: absolute; right: 0; bottom: 3px; border: 4px solid #000; border-top-color: transparent; border-left-color: transparent; }
.bar .sep { flex: none; width: 9px; height: 34px; border-left: 1px solid #999; margin-left: 2px; margin-right: -2px; }
.second .sep { margin: 0 -2px 0 5px; }
.bar .tool + .sep { margin-left: 2px; }

.combo {
  appearance: none;
  height: 28px;
  padding: 0 24px 0 4px;
  border: 1px solid #d0d0d0;
  border-bottom-color: #b8b8b8;
  border-radius: 2px;
  background: #fdfdfd url("data:image/svg+xml,%3Csvg xmlns='http://www.w3.org/2000/svg' width='10' height='6'%3E%3Cpath d='M1 1l4 4 4-4' fill='none' stroke='%23555'/%3E%3C/svg%3E") no-repeat right 5px center;
  color: #111;
  font: 14px/20px "Open Sans", "Noto Sans", sans-serif;
}
.track { width: 220px; margin-right: 3px; }
.viasize { width: 320px; }
.layerbox { display: flex; align-items: center; width: 159px; height: 26px; padding-left: 7px; border: 1px solid #888; border-radius: 2px; background: #fff; }
.layerbox .bare { flex: 1; height: 24px; border: 0; background-color: transparent; }
.chip { width: 14px; height: 14px; border: 1px solid #000; background: #c83434; }
.bar .pair { margin-left: 4px; }
.gridsize { width: 186px; }
.zoom { width: 119px; }
.tool.auto svg { height: 34px; }

.work { flex: 1; min-height: 0; display: flex; }
.side { flex: none; width: 45px; display: flex; flex-direction: column; align-items: center; gap: 3px; padding-top: 6px; }
.side .sep { width: 34px; height: 6px; border-top: 1px solid #888; margin: 2px 0 -2px; }
.canvas { flex: 1; min-width: 0; border: solid #8f8f8f; border-width: 1px 1px 0 0; background: #001023; overflow: hidden; }
.pcb { display: block; width: 100%; height: 100%; }
.pcb text { font-family: "DejaVu Sans Mono", monospace; }
.g16, .g14, .unit { font-family: "Open Sans", sans-serif; fill: #545454; font-size: 16px; font-weight: 600; }
.g14 { font-size: 14px; }
.unit { font-size: 17px; text-anchor: middle; }

.void { fill: #001023; }
.bt { fill: none; stroke: #4d7fc4; stroke-width: 17; stroke-linejoin: round; }
.ft { fill: none; stroke: #c83434; stroke-width: 17; stroke-linejoin: round; stroke-linecap: round; }
.pz { fill: #fa24da; opacity: .5; }
.cy { fill: none; stroke: #ff26e2; stroke-width: 3; }
.silk { fill: none; stroke: #f2eda1; }
.net { fill: #f0c0c0; stroke: none; text-anchor: middle; }
.net path { stroke: #e8a0a0; }
.num { fill: #f2c8c8; font-size: 36px; text-anchor: middle; }
.num.small { font-size: 30px; }
.num.big { font-size: 54px; }
.violet { fill: #e088ec; text-anchor: middle; }
.fab { fill: #afafaf; }
.bfab { fill: #5468a0; }
.back { fill: #e8b2a7; }
.bb { fill: #8890c0; }
.lab { fill: #f2eda1; }
.bold { font-weight: 700; }
.t14 { font-size: 14px; }
.t16 { font-size: 16px; }
.t18 { font-size: 18px; }
.t20 { font-size: 20px; }
.t22 { font-size: 22px; }
.t39 { font-size: 39px; }
.t44 { font-size: 44px; }
.t46 { font-size: 46px; }
.t50 { font-size: 50px; }
.t52 { font-size: 52px; }
.t55 { font-size: 55px; }
.t57 { font-size: 58px; }
.t60 { font-size: 60px; }
.t78 { font-size: 78px; }
.t80 { font-size: 80px; }
.t86 { font-size: 86px; }

.panel { flex: none; width: 300px; display: flex; flex-direction: column; border-left: 5px solid #dcdcdc; font-size: 13px; }
.head { height: 26px; padding-left: 4px; background: #b9b9b9; font-size: 15px; line-height: 25px; }
.tabs { display: flex; align-items: flex-end; height: 33px; padding: 6px 0 0 1px; font-size: 14px; }
.tab { height: 25px; padding: 0 5px; border: 1px solid #e4e4e4; border-left: 0; border-bottom: 0; background: #f3f3f3; }
.tab.active { height: 27px; width: 62px; padding: 0 8px 2px 4px; background: #fafafa; }
.tab.nets { width: 57px; padding-right: 17px; }
.book { margin-right: 2px; padding: 3px 0 3px 4px; border-bottom: 1px solid #e0e0e0; background: #fafafa; }
.scroll { display: flex; }
.layers { flex: 1; list-style: none; background: #f0f0f0; font-size: 12px; }
.layers li { display: flex; align-items: center; height: 20px; padding-left: 19px; line-height: 20px; }
.layers li.cur { background: #e1e1e1; padding-left: 7px; }
.cur::before { content: ""; border: 5px solid transparent; border-left: 6px solid #4040ff; border-right: 0; margin-right: 6px; }
.layers svg { width: 16px; height: 16px; margin: 0 5px 0 6px; }
.sw { width: 16px; height: 15px; }
.rail { width: 21px; margin-left: 1px; background: #f3f3f3; padding: 21px 0 62px 8px; }
.thumb { width: 3px; height: 100%; background: #888; border-radius: 2px; }
.fold { display: flex; align-items: center; gap: 3px; width: 277px; height: 22px; margin: 3px 0 0 5px; padding-left: 8px; background: #fff; font-size: 12px; }
.fold::before { content: ""; border: 5px solid transparent; border-left: 5px solid #000; border-right: 0; }
.presets { display: flex; flex-direction: column; padding: 12px 7px 6px; border-bottom: 5px solid #dcdcdc; }
.presets label { font-size: 12px; }
.presets .combo + label { padding-top: 4px; }
.filter { display: grid; grid-template-columns: 105px 1fr; padding: 7px 5px; font-size: 12px; }
.filter label { display: flex; align-items: center; gap: 3px; height: 20px; }
.filter input {
  appearance: none;
  width: 16px;
  height: 16px;
  margin: 0;
  border-radius: 3px;
  background: #005fb8 url("data:image/svg+xml,%3Csvg xmlns='http://www.w3.org/2000/svg' width='16' height='16'%3E%3Cpath d='M4 8l3 3 5-6' fill='none' stroke='%23fff'/%3E%3C/svg%3E");
}

.c1 { background: #c83434; }
.c2 { background: #4d7fc4; }
.c3 { background: #840084; }
.c4 { background: #000084; }
.c5 { background: #a59488; }
.c6 { background: #00b2b2; }
.c7 { background: #f2eda1; }
.c8 { background: #e8b2a7; }
.c9 { background: repeating-conic-gradient(#5a2a68 0 25%, #6c3c7a 0 50%) 0 0 / 11px 10px; }
.c10 { background: repeating-conic-gradient(#006860 0 25%, #1a8074 0 50%) 0 0 / 11px 10px; }
.c11 { background: #c2c2c2; }
.c12 { background: #5994dc; }
.c13 { background: #b4dbd2; }
.c14 { background: #d8c852; }
.c15 { background: #d0d2cd; }
.c16 { background: #ff26e2; }
.c17 { background: #26e9ff; }
.c18 { background: #afafaf; }
.c19 { background: #585d84; }

.info { flex: none; display: grid; grid-template-columns: 69px 65px 142px 68px auto; height: 42px; padding: 1px 14px 0; border-top: 1px solid #aaa; border-bottom: 1px solid #d8d8d8; font-size: 14px; line-height: 19px; }
.status { flex: none; display: flex; height: 27px; padding-top: 1px; line-height: 26px; white-space: nowrap; }
.status span { padding-left: 4px; border-right: 1px solid #dcdcdc; overflow: hidden; }
.status .s1 { padding-left: 2px; }
.s1 { width: 585px; }
.s2 { width: 97px; }
.s3 { width: 203px; }
.s4 { width: 321px; }
.s5 { width: 234px; }
.s6 { width: 76px; }
.s7 { width: 216px; }
.status .s8 { flex: 1; border-right: 0; }
```
